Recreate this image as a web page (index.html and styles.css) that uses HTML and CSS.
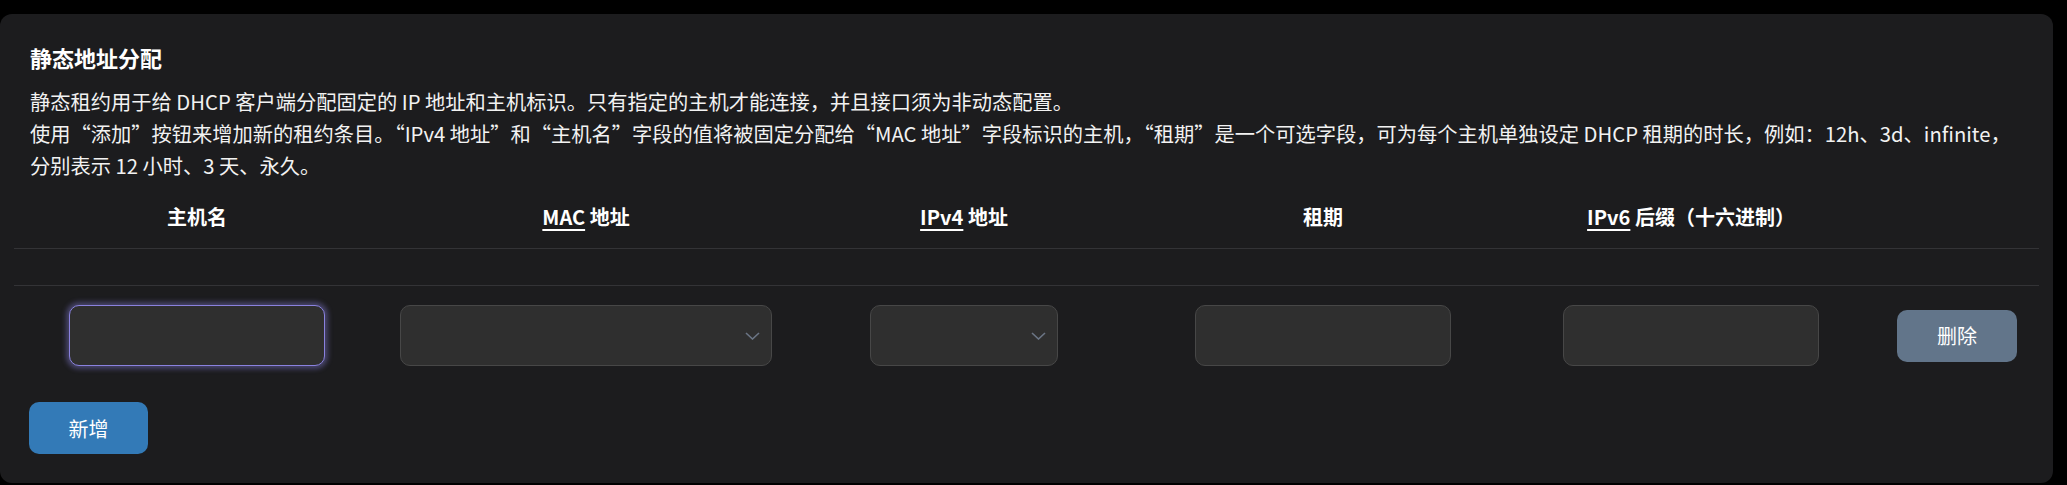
FILE: index.html
```html
<!DOCTYPE html>
<html lang="zh-CN">
<head>
<meta charset="utf-8">
<title>静态地址分配</title>
<link rel="stylesheet" href="styles.css">
</head>
<body>
<div class="card">
  <h3 class="title">静态地址分配</h3>
  <div class="desc">静态租约用于给 DHCP 客户端分配固定的 IP 地址和主机标识。只有指定的主机才能连接，并且接口须为非动态配置。<br>使用“添加”按钮来增加新的租约条目。“IPv4 地址”和“主机名”字段的值将被固定分配给“MAC 地址”字段标识的主机，“租期”是一个可选字段，可为每个主机单独设定 DHCP 租期的时长，例如：12h、3d、infinite，分别表示 12 小时、3 天、永久。</div>
  <div class="table">
    <div class="row head">
      <div class="cell">主机名</div>
      <div class="cell"><abbr>MAC</abbr> 地址</div>
      <div class="cell"><abbr>IPv4</abbr> 地址</div>
      <div class="cell">租期</div>
      <div class="cell"><abbr>IPv6</abbr> 后缀（十六进制）</div>
      <div class="cell"></div>
    </div>
    <div class="row empty"></div>
    <div class="row data">
      <div class="cell"><input class="field focused" type="text"></div>
      <div class="cell">
        <div class="select wide">
          <select class="field sel"><option></option></select>
          <svg class="chev" width="15" height="8" viewBox="0 0 15 8"><path d="M1 1 L7.5 7 L14 1" fill="none" stroke="#6b7585" stroke-width="1.6"/></svg>
        </div>
      </div>
      <div class="cell">
        <div class="select narrow">
          <select class="field sel"><option></option></select>
          <svg class="chev" width="15" height="8" viewBox="0 0 15 8"><path d="M1 1 L7.5 7 L14 1" fill="none" stroke="#6b7585" stroke-width="1.6"/></svg>
        </div>
      </div>
      <div class="cell"><input class="field" type="text"></div>
      <div class="cell"><input class="field" type="text"></div>
      <div class="cell"><button class="btn del">删除</button></div>
    </div>
  </div>
  <div class="footer"><button class="btn add">新增</button></div>
</div>
</body>
</html>
```
FILE: styles.css
```css
html, body {
  margin: 0;
  padding: 0;
  background: #000;
}
body {
  font-family: "Noto Sans CJK SC", "Noto Sans", sans-serif;
  color: #f2f2f2;
}
.card {
  margin: 14px 14px 0 0;
  background: #1c1c1e;
  border-radius: 12px;
  padding: 27px 14px 29px 14px;
  height: 469px;
  box-sizing: border-box;
}
.title {
  margin: 0;
  padding: 0 16px;
  font-size: 22px;
  line-height: 32px;
  font-weight: 700;
  color: #fff;
}
.desc {
  margin-top: 13px;
  padding: 0 16px;
  font-size: 20.25px;
  line-height: 32px;
}
.table {
  margin-top: 19px;
}
.row {
  display: grid;
  grid-template-columns: 366px 412px 344px 374px 362px 1fr;
  align-items: center;
}
.head {
  border-bottom: 1px solid #333336;
  padding-bottom: 15px;
}
.head .cell {
  text-align: center;
  font-size: 20px;
  line-height: 32px;
  font-weight: 700;
  color: #fff;
}
abbr {
  text-decoration: underline;
  text-decoration-thickness: 2px;
  text-underline-offset: 4px;
}
.empty {
  height: 36px;
  border-bottom: 1px solid #333336;
}
.data {
  padding: 19px 0 20px;
}
.data .cell {
  display: flex;
  justify-content: center;
}
.field {
  box-sizing: border-box;
  width: 256px;
  height: 61px;
  background: #2f2f2f;
  border: 1px solid #474747;
  border-radius: 10px;
  outline: none;
  color: #fff;
  font-family: inherit;
  font-size: 20px;
  padding: 0 14px;
}
.field.focused {
  border-color: #8a82df;
  box-shadow: 0 0 5px 3px rgba(138, 130, 223, 0.4);
}
.select {
  position: relative;
}
.select.wide .field { width: 372px; }
.select.narrow .field { width: 188px; }
.sel {
  appearance: none;
  -webkit-appearance: none;
  display: block;
}
.chev {
  position: absolute;
  right: 12px;
  top: 27px;
  pointer-events: none;
}
.btn {
  border: none;
  border-radius: 10px;
  color: #fff;
  font-family: inherit;
  font-size: 20px;
  width: 120px;
  height: 52px;
  padding: 0;
}
.del {
  background: #62758a;
  margin-left: 3px;
}
.footer {
  margin-top: 16px;
  padding: 0 15px;
}
.add {
  background: #337ab7;
  width: 119px;
}
```
